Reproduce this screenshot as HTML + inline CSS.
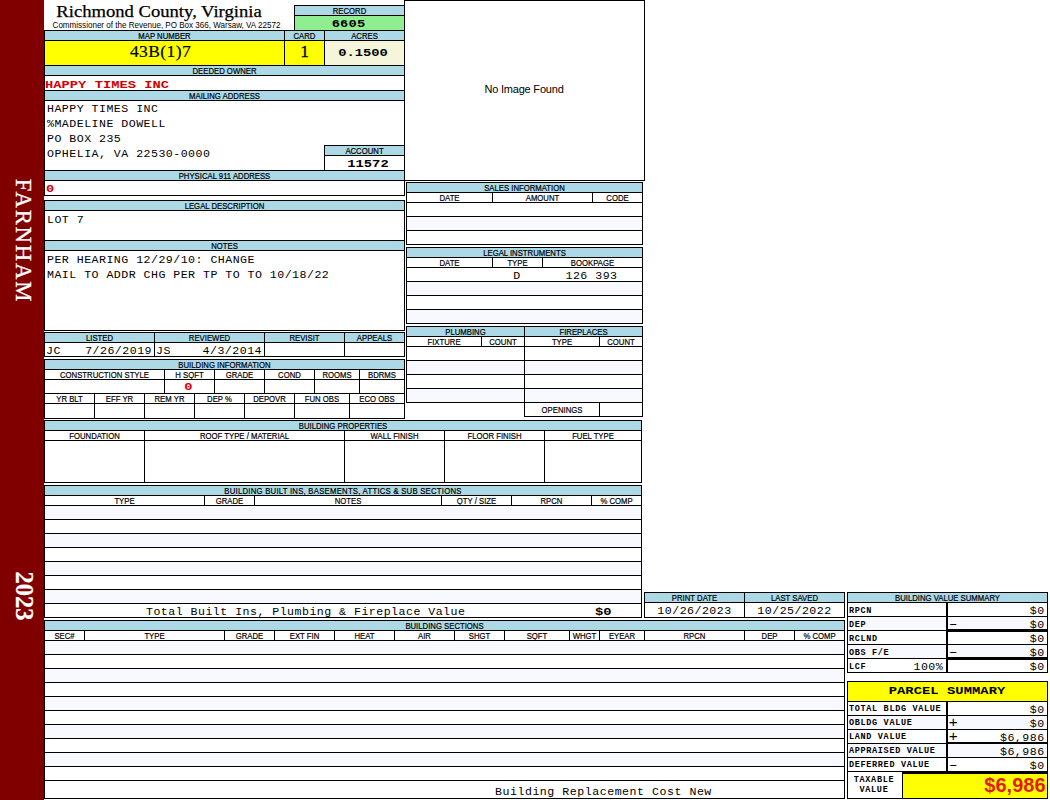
<!DOCTYPE html>
<html lang="en"><head><meta charset="utf-8"><title>Richmond County, Virginia - Property Card</title>
<style>
html,body{margin:0;padding:0;background:#fff;}
body{width:1050px;height:800px;position:relative;overflow:hidden;font-family:"Liberation Sans",sans-serif;color:#000;}
.r,.f,.l,.t,.side{position:absolute;box-sizing:border-box;}
.r{border:1px solid #000;}
.l{background:#000;}
.t{white-space:pre;text-align:center;overflow:visible;}
.lb{font:8.6px "Liberation Sans",sans-serif;margin-top:1.1px;-webkit-text-stroke:0.2px #000;transform:scaleX(0.9);}
.mo{font:11.6px "Liberation Mono",monospace;letter-spacing:0.47px;}
.mb{font:bold 10.7px "Liberation Mono",monospace;transform:scaleX(1.29);}
.sm{font:bold 8.5px "Liberation Mono",monospace;letter-spacing:0.67px;}
.sf{font-family:"Liberation Serif",serif;}
.red{color:#d40000;}
.ttl{font:17px "Liberation Serif",serif;-webkit-text-stroke:0.25px #000;transform:scaleX(1.095);}
.sub{font:8.6px "Liberation Sans",sans-serif;transform:scaleX(0.937);}
.big{font:bold 20px "Liberation Sans",sans-serif;color:#e61a0f;}
.side{color:#fff;font-family:"Liberation Serif",serif;white-space:pre;line-height:1;transform:translate(-50%,-50%) rotate(90deg);}
</style></head>
<body>
<div class="f" style="left:0;top:0;width:44px;height:800px;background:#800000"></div>
<div class="side" style="left:23.4px;top:240.6px;font-size:22.8px;letter-spacing:1.75px;-webkit-text-stroke:0.3px #fff">FARNHAM</div>
<div class="side" style="left:24px;top:596px;font-size:24.5px;font-weight:bold;-webkit-text-stroke:0.2px #fff">2023</div>
<div class="t ttl" style="left:44px;top:1px;width:230px;height:22px;line-height:22px;">Richmond County, Virginia</div>
<div class="t sub" style="left:44px;top:19.8px;width:245px;height:10px;line-height:10px;">Commissioner of the Revenue, PO Box 366, Warsaw, VA 22572</div>
<div class="r" style="left:294px;top:5px;width:111px;height:26px;"></div>
<div class="f" style="left:295px;top:6px;width:109px;height:9px;background:#add8e6"></div>
<div class="l" style="left:294px;top:15px;width:111px;height:1px"></div>
<div class="t lb" style="left:295px;top:6px;width:109px;height:9px;line-height:9px;">RECORD</div>
<div class="f" style="left:295px;top:16px;width:109px;height:14px;background:#90ee90"></div>
<div class="t mb" style="left:293px;top:16.5px;width:111px;height:14.0px;line-height:14.0px;letter-spacing:0.1px">6605</div>
<div class="r" style="left:44px;top:30px;width:361px;height:166px;"></div>
<div class="l" style="left:404px;top:0px;width:1px;height:31px"></div>
<div class="f" style="left:45px;top:31px;width:359px;height:9px;background:#add8e6"></div>
<div class="l" style="left:44px;top:40px;width:361px;height:1px"></div>
<div class="l" style="left:284px;top:30px;width:1px;height:36px"></div>
<div class="l" style="left:324px;top:30px;width:1px;height:36px"></div>
<div class="t lb" style="left:45px;top:31px;width:239px;height:9px;line-height:9px;">MAP NUMBER</div>
<div class="t lb" style="left:285px;top:31px;width:39px;height:9px;line-height:9px;">CARD</div>
<div class="t lb" style="left:325px;top:31px;width:79px;height:9px;line-height:9px;">ACRES</div>
<div class="f" style="left:45px;top:41px;width:239px;height:24px;background:#ffff00"></div>
<div class="f" style="left:285px;top:41px;width:39px;height:24px;background:#ffff00"></div>
<div class="f" style="left:325px;top:41px;width:79px;height:24px;background:#f5f5dc"></div>
<div class="l" style="left:44px;top:65px;width:361px;height:1px"></div>
<div class="t sf" style="left:45px;top:39.4px;width:231px;height:24.0px;line-height:24.0px;font-size:17.5px;letter-spacing:0.4px;-webkit-text-stroke:0.2px #000">43B(1)7</div>
<div class="t sf" style="left:285px;top:39.4px;width:39px;height:24.0px;line-height:24.0px;font-size:17.5px;-webkit-text-stroke:0.3px #000">1</div>
<div class="t mb" style="left:322px;top:41.5px;width:82px;height:22.0px;line-height:22.0px;">0.1500</div>
<div class="f" style="left:45px;top:66px;width:359px;height:9px;background:#add8e6"></div>
<div class="l" style="left:44px;top:75px;width:361px;height:1px"></div>
<div class="t lb" style="left:45px;top:66px;width:359px;height:9px;line-height:9px;">DEEDED OWNER</div>
<div class="l" style="left:44px;top:90px;width:361px;height:1px"></div>
<div class="t mb red" style="left:44.8px;top:77.5px;width:355.2px;height:14.0px;line-height:14.0px;text-align:left;transform-origin:0 50%">HAPPY TIMES INC</div>
<div class="f" style="left:45px;top:91px;width:359px;height:9px;background:#add8e6"></div>
<div class="l" style="left:44px;top:100px;width:361px;height:1px"></div>
<div class="t lb" style="left:45px;top:91px;width:359px;height:9px;line-height:9px;">MAILING ADDRESS</div>
<div class="t mo" style="left:47px;top:101.0px;width:353px;height:15.0px;line-height:15.0px;text-align:left">HAPPY TIMES INC</div>
<div class="t mo" style="left:47px;top:116.03px;width:353px;height:15.0px;line-height:15.0px;text-align:left">%MADELINE DOWELL</div>
<div class="t mo" style="left:47px;top:131.06px;width:353px;height:15.0px;line-height:15.0px;text-align:left">PO BOX 235</div>
<div class="t mo" style="left:47px;top:146.09px;width:353px;height:15.0px;line-height:15.0px;text-align:left">OPHELIA, VA 22530-0000</div>
<div class="r" style="left:324px;top:145px;width:81px;height:26px;"></div>
<div class="f" style="left:325px;top:146px;width:79px;height:9px;background:#add8e6"></div>
<div class="l" style="left:324px;top:155px;width:81px;height:1px"></div>
<div class="t lb" style="left:325px;top:146px;width:79px;height:9px;line-height:9px;">ACCOUNT</div>
<div class="t mb" style="left:325.5px;top:157px;width:84.0px;height:14px;line-height:14px;">11572</div>
<div class="l" style="left:44px;top:170px;width:361px;height:1px"></div>
<div class="f" style="left:45px;top:171px;width:359px;height:9px;background:#add8e6"></div>
<div class="l" style="left:44px;top:180px;width:361px;height:1px"></div>
<div class="t lb" style="left:45px;top:171px;width:359px;height:9px;line-height:9px;">PHYSICAL 911 ADDRESS</div>
<div class="t mb red" style="left:46px;top:182.2px;width:354px;height:14.0px;line-height:14.0px;text-align:left;transform-origin:0 50%">0</div>
<div class="r" style="left:44px;top:200px;width:361px;height:41px;"></div>
<div class="f" style="left:45px;top:201px;width:359px;height:9px;background:#add8e6"></div>
<div class="l" style="left:44px;top:210px;width:361px;height:1px"></div>
<div class="t lb" style="left:45px;top:201px;width:359px;height:9px;line-height:9px;">LEGAL DESCRIPTION</div>
<div class="t mo" style="left:47px;top:212px;width:353px;height:15px;line-height:15px;text-align:left">LOT 7</div>
<div class="r" style="left:44px;top:240px;width:361px;height:91px;"></div>
<div class="f" style="left:45px;top:241px;width:359px;height:9px;background:#add8e6"></div>
<div class="l" style="left:44px;top:250px;width:361px;height:1px"></div>
<div class="t lb" style="left:45px;top:241px;width:359px;height:9px;line-height:9px;">NOTES</div>
<div class="t mo" style="left:47px;top:252px;width:353px;height:15px;line-height:15px;text-align:left">PER HEARING 12/29/10: CHANGE</div>
<div class="t mo" style="left:47px;top:267px;width:353px;height:15px;line-height:15px;text-align:left">MAIL TO ADDR CHG PER TP TO TO 10/18/22</div>
<div class="r" style="left:44px;top:332px;width:361px;height:25px;"></div>
<div class="f" style="left:45px;top:333px;width:359px;height:9px;background:#add8e6"></div>
<div class="l" style="left:44px;top:342px;width:361px;height:1px"></div>
<div class="l" style="left:154px;top:332px;width:1px;height:25px"></div>
<div class="l" style="left:264px;top:332px;width:1px;height:25px"></div>
<div class="l" style="left:344px;top:332px;width:1px;height:25px"></div>
<div class="t lb" style="left:45px;top:333px;width:109px;height:9px;line-height:9px;">LISTED</div>
<div class="t lb" style="left:155px;top:333px;width:109px;height:9px;line-height:9px;">REVIEWED</div>
<div class="t lb" style="left:265px;top:333px;width:79px;height:9px;line-height:9px;">REVISIT</div>
<div class="t lb" style="left:345px;top:333px;width:59px;height:9px;line-height:9px;">APPEALS</div>
<div class="t mo" style="left:46px;top:343.7px;width:108px;height:13.0px;line-height:13.0px;text-align:left">JC</div>
<div class="t mo" style="left:46px;top:343.7px;width:106px;height:13.0px;line-height:13.0px;text-align:right">7/26/2019</div>
<div class="t mo" style="left:156px;top:343.7px;width:108px;height:13.0px;line-height:13.0px;text-align:left">JS</div>
<div class="t mo" style="left:156px;top:343.7px;width:106px;height:13.0px;line-height:13.0px;text-align:right">4/3/2014</div>
<div class="r" style="left:44px;top:359px;width:361px;height:60px;"></div>
<div class="f" style="left:45px;top:360px;width:359px;height:9px;background:#add8e6"></div>
<div class="l" style="left:44px;top:369px;width:361px;height:1px"></div>
<div class="t lb" style="left:45px;top:360px;width:359px;height:9px;line-height:9px;">BUILDING INFORMATION</div>
<div class="l" style="left:44px;top:379px;width:361px;height:1px"></div>
<div class="l" style="left:44px;top:393px;width:361px;height:1px"></div>
<div class="l" style="left:44px;top:403px;width:361px;height:1px"></div>
<div class="l" style="left:164px;top:369px;width:1px;height:25px"></div>
<div class="l" style="left:214px;top:369px;width:1px;height:25px"></div>
<div class="l" style="left:264px;top:369px;width:1px;height:25px"></div>
<div class="l" style="left:314px;top:369px;width:1px;height:25px"></div>
<div class="l" style="left:359px;top:369px;width:1px;height:25px"></div>
<div class="t lb" style="left:45px;top:370px;width:119px;height:9px;line-height:9px;">CONSTRUCTION STYLE</div>
<div class="t lb" style="left:165px;top:370px;width:49px;height:9px;line-height:9px;">H SQFT</div>
<div class="t lb" style="left:215px;top:370px;width:49px;height:9px;line-height:9px;">GRADE</div>
<div class="t lb" style="left:265px;top:370px;width:49px;height:9px;line-height:9px;">COND</div>
<div class="t lb" style="left:315px;top:370px;width:44px;height:9px;line-height:9px;">ROOMS</div>
<div class="t lb" style="left:360px;top:370px;width:44px;height:9px;line-height:9px;">BDRMS</div>
<div class="t mb red" style="left:163.5px;top:380.1px;width:49.0px;height:14.0px;line-height:14.0px;">0</div>
<div class="l" style="left:94px;top:393px;width:1px;height:26px"></div>
<div class="l" style="left:144px;top:393px;width:1px;height:26px"></div>
<div class="l" style="left:194px;top:393px;width:1px;height:26px"></div>
<div class="l" style="left:244px;top:393px;width:1px;height:26px"></div>
<div class="l" style="left:294px;top:393px;width:1px;height:26px"></div>
<div class="l" style="left:349px;top:393px;width:1px;height:26px"></div>
<div class="t lb" style="left:45px;top:394px;width:49px;height:9px;line-height:9px;">YR BLT</div>
<div class="t lb" style="left:95px;top:394px;width:49px;height:9px;line-height:9px;">EFF YR</div>
<div class="t lb" style="left:145px;top:394px;width:49px;height:9px;line-height:9px;">REM YR</div>
<div class="t lb" style="left:195px;top:394px;width:49px;height:9px;line-height:9px;">DEP %</div>
<div class="t lb" style="left:245px;top:394px;width:49px;height:9px;line-height:9px;">DEPOVR</div>
<div class="t lb" style="left:295px;top:394px;width:54px;height:9px;line-height:9px;">FUN OBS</div>
<div class="t lb" style="left:350px;top:394px;width:54px;height:9px;line-height:9px;">ECO OBS</div>
<div class="r" style="left:44px;top:420px;width:598px;height:63px;"></div>
<div class="f" style="left:45px;top:421px;width:596px;height:9px;background:#add8e6"></div>
<div class="l" style="left:44px;top:430px;width:598px;height:1px"></div>
<div class="t lb" style="left:45px;top:421px;width:596px;height:9px;line-height:9px;">BUILDING PROPERTIES</div>
<div class="l" style="left:44px;top:440px;width:598px;height:1px"></div>
<div class="l" style="left:144px;top:430px;width:1px;height:53px"></div>
<div class="l" style="left:344px;top:430px;width:1px;height:53px"></div>
<div class="l" style="left:444px;top:430px;width:1px;height:53px"></div>
<div class="l" style="left:544px;top:430px;width:1px;height:53px"></div>
<div class="t lb" style="left:45px;top:431px;width:99px;height:9px;line-height:9px;">FOUNDATION</div>
<div class="t lb" style="left:145px;top:431px;width:199px;height:9px;line-height:9px;">ROOF TYPE / MATERIAL</div>
<div class="t lb" style="left:345px;top:431px;width:99px;height:9px;line-height:9px;">WALL FINISH</div>
<div class="t lb" style="left:445px;top:431px;width:99px;height:9px;line-height:9px;">FLOOR FINISH</div>
<div class="t lb" style="left:545px;top:431px;width:96px;height:9px;line-height:9px;">FUEL TYPE</div>
<div class="r" style="left:44px;top:485px;width:598px;height:133px;"></div>
<div class="f" style="left:45px;top:486px;width:596px;height:9px;background:#add8e6"></div>
<div class="l" style="left:44px;top:495px;width:598px;height:1px"></div>
<div class="t lb" style="left:45px;top:486px;width:596px;height:9px;line-height:9px;"><span style="letter-spacing:0.27px">BUILDING BUILT INS, BASEMENTS, ATTICS &amp; SUB SECTIONS</span></div>
<div class="l" style="left:44px;top:505px;width:598px;height:1px"></div>
<div class="l" style="left:204px;top:495px;width:1px;height:11px"></div>
<div class="l" style="left:254px;top:495px;width:1px;height:11px"></div>
<div class="l" style="left:441px;top:495px;width:1px;height:11px"></div>
<div class="l" style="left:511px;top:495px;width:1px;height:11px"></div>
<div class="l" style="left:591px;top:495px;width:1px;height:11px"></div>
<div class="t lb" style="left:45px;top:496px;width:159px;height:9px;line-height:9px;">TYPE</div>
<div class="t lb" style="left:205px;top:496px;width:49px;height:9px;line-height:9px;">GRADE</div>
<div class="t lb" style="left:255px;top:496px;width:186px;height:9px;line-height:9px;">NOTES</div>
<div class="t lb" style="left:442px;top:496px;width:69px;height:9px;line-height:9px;">QTY / SIZE</div>
<div class="t lb" style="left:512px;top:496px;width:79px;height:9px;line-height:9px;">RPCN</div>
<div class="t lb" style="left:592px;top:496px;width:49px;height:9px;line-height:9px;">% COMP</div>
<div class="f" style="left:45px;top:506px;width:596px;height:13px;background:#f8f8ff"></div>
<div class="l" style="left:44px;top:519px;width:598px;height:1px"></div>
<div class="l" style="left:44px;top:533px;width:598px;height:1px"></div>
<div class="f" style="left:45px;top:534px;width:596px;height:13px;background:#f8f8ff"></div>
<div class="l" style="left:44px;top:547px;width:598px;height:1px"></div>
<div class="l" style="left:44px;top:561px;width:598px;height:1px"></div>
<div class="f" style="left:45px;top:562px;width:596px;height:13px;background:#f8f8ff"></div>
<div class="l" style="left:44px;top:575px;width:598px;height:1px"></div>
<div class="l" style="left:44px;top:589px;width:598px;height:1px"></div>
<div class="f" style="left:45px;top:590px;width:596px;height:13px;background:#f8f8ff"></div>
<div class="l" style="left:44px;top:603px;width:598px;height:1px"></div>
<div class="t mo" style="left:146px;top:604.8px;width:320px;height:13.0px;line-height:13.0px;text-align:left">Total Built Ins, Plumbing &amp; Fireplace Value</div>
<div class="t mb" style="left:560px;top:605.7px;width:51.5px;height:13.0px;line-height:13.0px;text-align:right;transform-origin:100% 50%">$0</div>
<div class="r" style="left:44px;top:620px;width:801px;height:179px;"></div>
<div class="f" style="left:45px;top:621px;width:799px;height:9px;background:#add8e6"></div>
<div class="l" style="left:44px;top:630px;width:801px;height:1px"></div>
<div class="t lb" style="left:45px;top:621px;width:799px;height:9px;line-height:9px;">BUILDING SECTIONS</div>
<div class="l" style="left:44px;top:640px;width:801px;height:1px"></div>
<div class="l" style="left:84px;top:630px;width:1px;height:11px"></div>
<div class="l" style="left:224px;top:630px;width:1px;height:11px"></div>
<div class="l" style="left:274px;top:630px;width:1px;height:11px"></div>
<div class="l" style="left:334px;top:630px;width:1px;height:11px"></div>
<div class="l" style="left:394px;top:630px;width:1px;height:11px"></div>
<div class="l" style="left:454px;top:630px;width:1px;height:11px"></div>
<div class="l" style="left:504px;top:630px;width:1px;height:11px"></div>
<div class="l" style="left:569px;top:630px;width:1px;height:11px"></div>
<div class="l" style="left:599px;top:630px;width:1px;height:11px"></div>
<div class="l" style="left:644px;top:630px;width:1px;height:11px"></div>
<div class="l" style="left:744px;top:630px;width:1px;height:11px"></div>
<div class="l" style="left:794px;top:630px;width:1px;height:11px"></div>
<div class="t lb" style="left:45px;top:631px;width:39px;height:9px;line-height:9px;">SEC#</div>
<div class="t lb" style="left:85px;top:631px;width:139px;height:9px;line-height:9px;">TYPE</div>
<div class="t lb" style="left:225px;top:631px;width:49px;height:9px;line-height:9px;">GRADE</div>
<div class="t lb" style="left:275px;top:631px;width:59px;height:9px;line-height:9px;">EXT FIN</div>
<div class="t lb" style="left:335px;top:631px;width:59px;height:9px;line-height:9px;">HEAT</div>
<div class="t lb" style="left:395px;top:631px;width:59px;height:9px;line-height:9px;">AIR</div>
<div class="t lb" style="left:455px;top:631px;width:49px;height:9px;line-height:9px;">SHGT</div>
<div class="t lb" style="left:505px;top:631px;width:64px;height:9px;line-height:9px;">SQFT</div>
<div class="t lb" style="left:570px;top:631px;width:29px;height:9px;line-height:9px;">WHGT</div>
<div class="t lb" style="left:600px;top:631px;width:44px;height:9px;line-height:9px;">EYEAR</div>
<div class="t lb" style="left:645px;top:631px;width:99px;height:9px;line-height:9px;">RPCN</div>
<div class="t lb" style="left:745px;top:631px;width:49px;height:9px;line-height:9px;">DEP</div>
<div class="t lb" style="left:795px;top:631px;width:49px;height:9px;line-height:9px;">% COMP</div>
<div class="f" style="left:45px;top:641px;width:799px;height:13px;background:#f8f8ff"></div>
<div class="l" style="left:44px;top:654px;width:801px;height:1px"></div>
<div class="l" style="left:44px;top:668px;width:801px;height:1px"></div>
<div class="f" style="left:45px;top:669px;width:799px;height:13px;background:#f8f8ff"></div>
<div class="l" style="left:44px;top:682px;width:801px;height:1px"></div>
<div class="l" style="left:44px;top:696px;width:801px;height:1px"></div>
<div class="f" style="left:45px;top:697px;width:799px;height:13px;background:#f8f8ff"></div>
<div class="l" style="left:44px;top:710px;width:801px;height:1px"></div>
<div class="l" style="left:44px;top:724px;width:801px;height:1px"></div>
<div class="f" style="left:45px;top:725px;width:799px;height:13px;background:#f8f8ff"></div>
<div class="l" style="left:44px;top:738px;width:801px;height:1px"></div>
<div class="l" style="left:44px;top:752px;width:801px;height:1px"></div>
<div class="f" style="left:45px;top:753px;width:799px;height:13px;background:#f8f8ff"></div>
<div class="l" style="left:44px;top:766px;width:801px;height:1px"></div>
<div class="l" style="left:44px;top:780px;width:801px;height:1px"></div>
<div class="t mo" style="left:495px;top:783.8px;width:265px;height:15.0px;line-height:15.0px;text-align:left;letter-spacing:0.52px">Building Replacement Cost New</div>
<div class="r" style="left:404px;top:0px;width:241px;height:181px;"></div>
<div class="t" style="left:405px;top:83px;width:238px;height:14px;line-height:14px;font:11px 'Liberation Sans',sans-serif;letter-spacing:-0.2px;text-align:center">No Image Found</div>
<div class="r" style="left:406px;top:182px;width:237px;height:63px;"></div>
<div class="f" style="left:407px;top:183px;width:235px;height:9px;background:#add8e6"></div>
<div class="l" style="left:406px;top:192px;width:237px;height:1px"></div>
<div class="t lb" style="left:407px;top:183px;width:235px;height:9px;line-height:9px;">SALES INFORMATION</div>
<div class="l" style="left:406px;top:202px;width:237px;height:1px"></div>
<div class="l" style="left:492px;top:192px;width:1px;height:11px"></div>
<div class="l" style="left:592px;top:192px;width:1px;height:11px"></div>
<div class="t lb" style="left:407px;top:193px;width:85px;height:9px;line-height:9px;">DATE</div>
<div class="t lb" style="left:493px;top:193px;width:99px;height:9px;line-height:9px;">AMOUNT</div>
<div class="t lb" style="left:593px;top:193px;width:49px;height:9px;line-height:9px;">CODE</div>
<div class="l" style="left:406px;top:216px;width:237px;height:1px"></div>
<div class="l" style="left:406px;top:230px;width:237px;height:1px"></div>
<div class="f" style="left:407px;top:217px;width:235px;height:13px;background:#f8f8ff"></div>
<div class="r" style="left:406px;top:247px;width:237px;height:77px;"></div>
<div class="f" style="left:407px;top:248px;width:235px;height:9px;background:#add8e6"></div>
<div class="l" style="left:406px;top:257px;width:237px;height:1px"></div>
<div class="t lb" style="left:407px;top:248px;width:235px;height:9px;line-height:9px;">LEGAL INSTRUMENTS</div>
<div class="l" style="left:406px;top:267px;width:237px;height:1px"></div>
<div class="l" style="left:492px;top:257px;width:1px;height:11px"></div>
<div class="l" style="left:542px;top:257px;width:1px;height:11px"></div>
<div class="t lb" style="left:407px;top:258px;width:85px;height:9px;line-height:9px;">DATE</div>
<div class="t lb" style="left:493px;top:258px;width:49px;height:9px;line-height:9px;">TYPE</div>
<div class="t lb" style="left:543px;top:258px;width:99px;height:9px;line-height:9px;">BOOKPAGE</div>
<div class="l" style="left:406px;top:281px;width:237px;height:1px"></div>
<div class="l" style="left:406px;top:295px;width:237px;height:1px"></div>
<div class="l" style="left:406px;top:309px;width:237px;height:1px"></div>
<div class="f" style="left:407px;top:282px;width:235px;height:13px;background:#f8f8ff"></div>
<div class="f" style="left:407px;top:310px;width:235px;height:13px;background:#f8f8ff"></div>
<div class="t mo" style="left:492px;top:269px;width:50px;height:14px;line-height:14px;">D</div>
<div class="t mo" style="left:541px;top:269px;width:101px;height:14px;line-height:14px;">126 393</div>
<div class="r" style="left:406px;top:326px;width:119px;height:77px;"></div>
<div class="r" style="left:524px;top:326px;width:119px;height:91px;"></div>
<div class="f" style="left:407px;top:327px;width:117px;height:9px;background:#add8e6"></div>
<div class="l" style="left:406px;top:336px;width:119px;height:1px"></div>
<div class="t lb" style="left:407px;top:327px;width:117px;height:9px;line-height:9px;">PLUMBING</div>
<div class="f" style="left:525px;top:327px;width:117px;height:9px;background:#add8e6"></div>
<div class="l" style="left:524px;top:336px;width:119px;height:1px"></div>
<div class="t lb" style="left:525px;top:327px;width:117px;height:9px;line-height:9px;">FIREPLACES</div>
<div class="l" style="left:406px;top:346px;width:237px;height:1px"></div>
<div class="l" style="left:481px;top:336px;width:1px;height:11px"></div>
<div class="l" style="left:599px;top:336px;width:1px;height:11px"></div>
<div class="l" style="left:599px;top:402px;width:1px;height:15px"></div>
<div class="t lb" style="left:407px;top:337px;width:74px;height:9px;line-height:9px;">FIXTURE</div>
<div class="t lb" style="left:482px;top:337px;width:42px;height:9px;line-height:9px;">COUNT</div>
<div class="t lb" style="left:525px;top:337px;width:74px;height:9px;line-height:9px;">TYPE</div>
<div class="t lb" style="left:600px;top:337px;width:42px;height:9px;line-height:9px;">COUNT</div>
<div class="l" style="left:406px;top:360px;width:237px;height:1px"></div>
<div class="l" style="left:406px;top:374px;width:237px;height:1px"></div>
<div class="l" style="left:406px;top:388px;width:237px;height:1px"></div>
<div class="l" style="left:406px;top:402px;width:237px;height:1px"></div>
<div class="f" style="left:407px;top:361px;width:117px;height:13px;background:#f8f8ff"></div>
<div class="f" style="left:525px;top:361px;width:117px;height:13px;background:#f8f8ff"></div>
<div class="f" style="left:407px;top:389px;width:117px;height:13px;background:#f8f8ff"></div>
<div class="f" style="left:525px;top:389px;width:117px;height:13px;background:#f8f8ff"></div>
<div class="t lb" style="left:525px;top:403px;width:74px;height:13px;line-height:13px;">OPENINGS</div>
<div class="r" style="left:644px;top:592px;width:201px;height:26px;"></div>
<div class="f" style="left:645px;top:593px;width:199px;height:9px;background:#add8e6"></div>
<div class="l" style="left:644px;top:602px;width:201px;height:1px"></div>
<div class="l" style="left:744px;top:592px;width:1px;height:26px"></div>
<div class="t lb" style="left:645px;top:593px;width:99px;height:9px;line-height:9px;">PRINT DATE</div>
<div class="t lb" style="left:745px;top:593px;width:99px;height:9px;line-height:9px;">LAST SAVED</div>
<div class="t mo" style="left:645px;top:603.8px;width:99px;height:14.0px;line-height:14.0px;">10/26/2023</div>
<div class="t mo" style="left:745px;top:603.8px;width:99px;height:14.0px;line-height:14.0px;">10/25/2022</div>
<div class="r" style="left:847px;top:592px;width:201px;height:81px;"></div>
<div class="f" style="left:848px;top:593px;width:199px;height:9px;background:#add8e6"></div>
<div class="l" style="left:847px;top:602px;width:201px;height:1px"></div>
<div class="t lb" style="left:848px;top:593px;width:199px;height:9px;line-height:9px;">BUILDING VALUE SUMMARY</div>
<div class="l" style="left:847px;top:616px;width:201px;height:1px"></div>
<div class="t sm" style="left:849px;top:605.3px;width:97px;height:13.0px;line-height:13.0px;text-align:left">RPCN</div>
<div class="t mo" style="left:950px;top:603.6px;width:94.59999999999991px;height:13.0px;line-height:13.0px;text-align:right">$0</div>
<div class="f" style="left:848px;top:617px;width:199px;height:13px;background:#f8f8ff"></div>
<div class="l" style="left:847px;top:630px;width:201px;height:1px"></div>
<div class="l" style="left:948px;top:629px;width:100px;height:3px"></div>
<div class="t sm" style="left:849px;top:619.3px;width:97px;height:13.0px;line-height:13.0px;text-align:left">DEP</div>
<div class="t mo" style="left:948.9px;top:616.9px;width:16.100000000000023px;height:14.0px;line-height:14.0px;text-align:left;font-size:14px;letter-spacing:0">&#8211;</div>
<div class="t mo" style="left:950px;top:617.6px;width:94.59999999999991px;height:13.0px;line-height:13.0px;text-align:right">$0</div>
<div class="l" style="left:847px;top:644px;width:201px;height:1px"></div>
<div class="t sm" style="left:849px;top:633.3px;width:97px;height:13.0px;line-height:13.0px;text-align:left">RCLND</div>
<div class="t mo" style="left:950px;top:631.6px;width:94.59999999999991px;height:13.0px;line-height:13.0px;text-align:right">$0</div>
<div class="f" style="left:848px;top:645px;width:199px;height:13px;background:#f8f8ff"></div>
<div class="l" style="left:847px;top:658px;width:201px;height:1px"></div>
<div class="l" style="left:948px;top:657px;width:100px;height:3px"></div>
<div class="t sm" style="left:849px;top:647.3px;width:97px;height:13.0px;line-height:13.0px;text-align:left">OBS F/E</div>
<div class="t mo" style="left:948.9px;top:644.9px;width:16.100000000000023px;height:14.0px;line-height:14.0px;text-align:left;font-size:14px;letter-spacing:0">&#8211;</div>
<div class="t mo" style="left:950px;top:645.6px;width:94.59999999999991px;height:13.0px;line-height:13.0px;text-align:right">$0</div>
<div class="t sm" style="left:849px;top:661.3px;width:97px;height:13.0px;line-height:13.0px;text-align:left">LCF</div>
<div class="t mo" style="left:950px;top:659.6px;width:94.59999999999991px;height:13.0px;line-height:13.0px;text-align:right">$0</div>
<div class="t mo" style="left:850px;top:659.5px;width:93.20000000000005px;height:13.0px;line-height:13.0px;text-align:right">100%</div>
<div class="l" style="left:946px;top:602px;width:2px;height:71px"></div>
<div class="r" style="left:847px;top:681px;width:201px;height:118px;"></div>
<div class="f" style="left:848px;top:682px;width:199px;height:19px;background:#ffff00"></div>
<div class="l" style="left:847px;top:701px;width:201px;height:1px"></div>
<div class="t mb" style="left:846.5px;top:683.4px;width:200.0px;height:17.0px;line-height:17.0px;letter-spacing:0.05px">PARCEL SUMMARY</div>
<div class="l" style="left:847px;top:715px;width:201px;height:1px"></div>
<div class="t sm" style="left:849px;top:703.1px;width:97px;height:13.0px;line-height:13.0px;text-align:left">TOTAL BLDG VALUE</div>
<div class="t mo" style="left:950px;top:702.6px;width:94.59999999999991px;height:13.0px;line-height:13.0px;text-align:right">$0</div>
<div class="f" style="left:848px;top:716px;width:199px;height:13px;background:#f8f8ff"></div>
<div class="l" style="left:847px;top:729px;width:201px;height:1px"></div>
<div class="t sm" style="left:849px;top:717.1px;width:97px;height:13.0px;line-height:13.0px;text-align:left">OBLDG VALUE</div>
<div class="t mo" style="left:948.7px;top:716.8px;width:16.299999999999955px;height:14.0px;line-height:14.0px;text-align:left;font-size:15px;letter-spacing:0">+</div>
<div class="t mo" style="left:950px;top:716.6px;width:94.59999999999991px;height:13.0px;line-height:13.0px;text-align:right">$0</div>
<div class="l" style="left:847px;top:743px;width:201px;height:1px"></div>
<div class="l" style="left:948px;top:742px;width:100px;height:3px"></div>
<div class="t sm" style="left:849px;top:731.1px;width:97px;height:13.0px;line-height:13.0px;text-align:left">LAND VALUE</div>
<div class="t mo" style="left:948.7px;top:730.8px;width:16.299999999999955px;height:14.0px;line-height:14.0px;text-align:left;font-size:15px;letter-spacing:0">+</div>
<div class="t mo" style="left:950px;top:730.6px;width:94.59999999999991px;height:13.0px;line-height:13.0px;text-align:right">$6,986</div>
<div class="f" style="left:848px;top:744px;width:199px;height:13px;background:#f8f8ff"></div>
<div class="l" style="left:847px;top:757px;width:201px;height:1px"></div>
<div class="t sm" style="left:849px;top:745.1px;width:97px;height:13.0px;line-height:13.0px;text-align:left">APPRAISED VALUE</div>
<div class="t mo" style="left:950px;top:744.6px;width:94.59999999999991px;height:13.0px;line-height:13.0px;text-align:right">$6,986</div>
<div class="l" style="left:847px;top:771px;width:201px;height:1px"></div>
<div class="t sm" style="left:849px;top:759.1px;width:97px;height:13.0px;line-height:13.0px;text-align:left">DEFERRED VALUE</div>
<div class="t mo" style="left:948.9px;top:757.9px;width:16.100000000000023px;height:14.0px;line-height:14.0px;text-align:left;font-size:14px;letter-spacing:0">&#8211;</div>
<div class="t mo" style="left:950px;top:758.6px;width:94.59999999999991px;height:13.0px;line-height:13.0px;text-align:right">$0</div>
<div class="l" style="left:946px;top:701px;width:2px;height:71px"></div>
<div class="l" style="left:902px;top:771px;width:146px;height:3px"></div>
<div class="l" style="left:902px;top:771px;width:1px;height:28px"></div>
<div class="f" style="left:903px;top:774px;width:144px;height:24px;background:#ffff00"></div>
<div class="t sm" style="left:846.5px;top:774px;width:55.0px;height:13px;line-height:13px;text-align:center">TAXABLE</div>
<div class="t sm" style="left:846.5px;top:784px;width:55.0px;height:13px;line-height:13px;text-align:center">VALUE</div>
<div class="t big" style="left:903px;top:773px;width:142.5px;height:25px;line-height:25px;text-align:right">$6,986</div>
</body></html>
